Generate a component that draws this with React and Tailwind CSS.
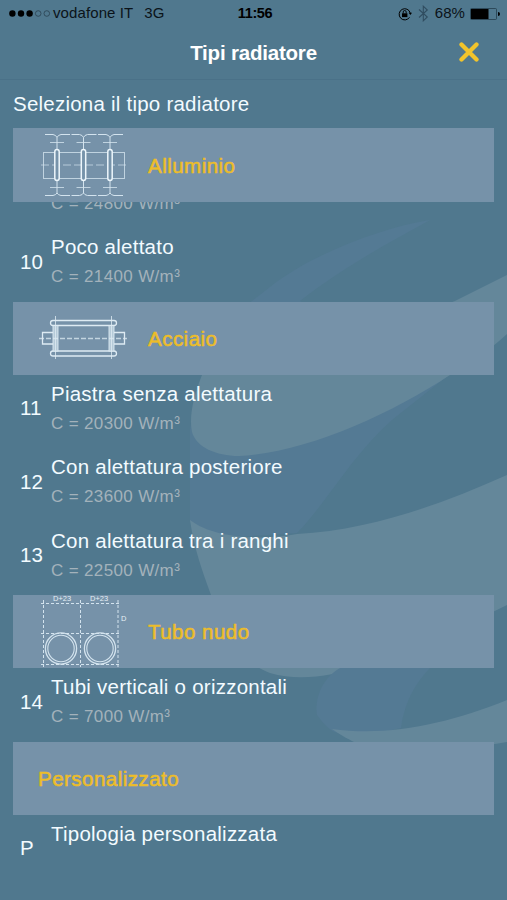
import React from "react";

function Backdrop() {
  return (
    <svg className="absolute inset-0 -z-10" width="507" height="900" viewBox="0 0 507 900" fill="none">
      <path d="M430 220 C380 228 310 255 270 287 L252 301 C214 332 199 370 190 430 L190 522 C196 532 212 537 235 537 L297 533 C325 505 352 455 392 420 C413 403 430 390 450 374 L300 301 C345 266 390 242 430 220Z" fill="#547a94" />
      <path d="M507 275 L455 301 C360 338 230 337 202 375 C193 397 189 418 192 432 C196 447 216 456 239 456 C305 453 389 415 450 375 C472 361 490 350 507 334Z" fill="#64879a" />
      <path d="M507 475 C440 505 370 530 297 534 C260 541 213 538 190 520 C194 548 202 570 211 595 C220 640 240 661 270 673 C300 682 333 675 360 668 C414 655 455 630 507 605Z" fill="#64879a" />
      <path d="M340 668 C320 680 315 700 317 715 C325 726 331 731 337 733 C360 737 380 733 401 728 C405 700 416 683 430 668Z" fill="#547a94" />
      <path d="M507 700 C450 723 390 737 332 729 C342 736 350 740 358 744 L495 744 L507 742Z" fill="#64879a" />
    </svg>
  );
}

function StatusBar() {
  return (
    <div className="flex h-[27px] items-center pl-[9px] pr-[6px] text-[15px] text-[#0b1319]">
      <div className="flex flex-1 items-center">
        <svg width="42" height="10" viewBox="0 0 42 10">
          <circle cx="3.4" cy="4.5" r="3.2" fill="#000" />
          <circle cx="12" cy="4.5" r="3.2" fill="#000" />
          <circle cx="20.6" cy="4.5" r="3.2" fill="#000" />
          <circle cx="29.2" cy="4.5" r="2.8" fill="none" stroke="#243947" strokeWidth=".7" />
          <circle cx="37.8" cy="4.5" r="2.8" fill="none" stroke="#243947" strokeWidth=".7" />
        </svg>
        <span className="ml-[2px] whitespace-nowrap tracking-[0.1px]">vodafone IT</span>
        <span className="ml-[11px]">3G</span>
      </div>
      <span className="text-[14.5px] font-bold tracking-[-0.4px] text-black">11:56</span>
      <div className="flex flex-1 items-center justify-end">
        <svg width="14" height="14" viewBox="0 0 14 14" fill="none" stroke="#000">
          <path d="M11.5 10.3A5.6 5.6 0 1 1 12.2 6" strokeWidth="1" />
          <path d="M10.7 5.8H14L12.4 8Z" fill="#000" stroke="none" />
          <rect x="4" y="6.3" width="5.4" height="3.8" fill="#000" stroke="none" />
          <path d="M5.2 6.5V5a1.5 1.5 0 0 1 3 0v1.5" strokeWidth=".9" />
        </svg>
        <svg className="ml-[6px]" width="11" height="17" viewBox="0 0 11 17" fill="none" stroke="#304d60" strokeWidth="1.1">
          <path d="M1 4.5L9.3 12 5.3 15.8V1.2L9.3 5 1 12.5" />
        </svg>
        <span className="ml-[6px] mr-[5px] tracking-[0.1px]">68%</span>
        <svg className="mr-px" width="30" height="12" viewBox="0 0 30 12">
          <rect x=".5" y=".5" width="26" height="11" rx="1" fill="none" stroke="#243d4d" strokeWidth=".8" />
          <rect x="1" y="1" width="17.5" height="10" fill="#000" />
          <path d="M28 4a2 2 0 0 1 0 4Z" fill="#000" />
        </svg>
      </div>
    </div>
  );
}

function AluminiumIcon() {
  return (
    <svg className="ml-[2px]" width="86" height="64" viewBox="0 0 86 64" fill="none" stroke="#d3e3ee" strokeWidth="1">
      <rect x="2.5" y="19.5" width="81" height="26" strokeOpacity=".8" />
      <path d="M0 32H86" strokeDasharray="8 3" strokeOpacity=".7" />
      {[16, 42.5, 69].map((x) => (
        <g key={x} transform={`translate(${x} 0)`}>
          <path d="M-12 1.5H-4Q-1 2 0 4.5V60Q-1 62 -4 62.5H-12M0 4.5Q1 2 4 1.5H13M0 60Q1 62 4 62.5H13" />
          <path d="M-7 9.5H7M-7 54.5H7" strokeOpacity=".8" />
          <rect x="-2.2" y="16.5" width="4.4" height="31" rx="2.2" fill="#7693aa" stroke="#edf6fb" strokeWidth="1.5" />
        </g>
      ))}
    </svg>
  );
}

function SteelIcon() {
  return (
    <svg width="88" height="44" viewBox="0 0 88 44" fill="none" stroke="#deebf3" strokeWidth="1.3">
      <rect x="11.5" y="4.5" width="66" height="5" rx="2.5" />
      <rect x="11.5" y="35" width="66" height="5" rx="2.5" />
      <rect x="14" y="9.5" width="5" height="25.5" fill="#b5cad8" strokeWidth=".9" />
      <rect x="70" y="9.5" width="5" height="25.5" fill="#b5cad8" strokeWidth=".9" />
      <path d="M14 16.5H3.5V28H14M75 16.5H85.5V28H75" />
      <path d="M16.5 0V43M72.5 0V43" strokeWidth=".8" />
      <path d="M0 22.5H88" strokeDasharray="5 2" strokeOpacity=".75" />
    </svg>
  );
}

function PipesIcon() {
  return (
    <svg className="ml-[1px]" width="88" height="74" viewBox="0 0 88 74" fill="none" stroke="#d3e3ee">
      <path d="M1 8.5H81M1 38.5H81M1 69.5H81M3.5 5V72M40.5 5V72M78 5V72" strokeWidth="1" strokeDasharray="3 2" />
      {[21, 60].map((x) => (
        <g key={x}>
          <circle cx={x} cy="53.5" r="15.6" strokeWidth="1.3" />
          <circle cx={x} cy="53.5" r="13.2" strokeWidth="1.1" />
        </g>
      ))}
      <g fill="#e5eff5" stroke="none" fontFamily="Liberation Sans, sans-serif" fontSize="7.5">
        <text x="13" y="6">D+23</text>
        <text x="50" y="6">D+23</text>
        <text x="81" y="26">D</text>
      </g>
    </svg>
  );
}

function GroupHeader({ title, children }) {
  return (
    <div className="mx-[13px] flex h-[73.33px] shrink-0 items-center bg-[#7692a9] text-[20.5px] text-[#edbd29] [-webkit-text-stroke:0.55px_#edbd29]">
      {children ? (
        <div className="flex h-full w-[135px] shrink-0 items-center pl-[26px] [-webkit-text-stroke:0]">{children}</div>
      ) : (
        <div className="w-[25px]" />
      )}
      <span className="pt-[2px] tracking-[0.48px]">{title}</span>
    </div>
  );
}

function Value({ children }) {
  return <div className="whitespace-nowrap text-[17px] leading-[24px] tracking-[0.35px] text-[#a3b2bb]">{children}</div>;
}

function Row({ code, name, value }) {
  return (
    <div className="flex h-[73.33px] shrink-0 pl-5">
      <span className="w-[31px] pt-[19.5px] text-[20.5px] leading-[28px]">{code}</span>
      <div>
        <div className="mb-[4px] h-[33px] whitespace-nowrap pt-[5px] text-[20.5px] leading-[28px] tracking-[0.24px]">{name}</div>
        {value && <Value>{value}</Value>}
      </div>
    </div>
  );
}

export default function App() {
  return (
    <main className="relative isolate flex h-[900px] w-[507px] flex-col overflow-hidden bg-[#50788e] font-['Liberation_Sans',Arial,sans-serif] text-[#f3fbff]">
      <Backdrop />
      <StatusBar />
      <header className="flex h-[53px] items-center border-b border-[#4a7188]">
        <div className="w-[68px]" />
        <h1 className="flex-1 text-center text-[20.5px] font-bold tracking-[-0.2px] text-white">Tipi radiatore</h1>
        <button className="w-[68px] pl-[20px]" aria-label="Chiudi">
          <svg className="-mt-[2px]" width="20" height="20" viewBox="0 0 20 20" stroke="#f2c42b" strokeWidth="4.3" strokeLinecap="round">
            <path d="M2.5 2.5L17.5 17.5M17.500 2.500L2.500 17.500" />
          </svg>
        </button>
      </header>
      <div className="h-[48.33px] pl-[13px] pt-[10px] text-[20.5px] leading-[28px] tracking-[0.23px]">Seleziona il tipo radiatore</div>
      <GroupHeader title="Alluminio"><AluminiumIcon /></GroupHeader>
      <div className="h-[26.67px] shrink-0 overflow-hidden pl-[51px]">
        <div className="-mt-[10px]"><Value>C = 24800 W/m³</Value></div>
      </div>
      <Row code="10" name="Poco alettato" value="C = 21400 W/m³" />
      <GroupHeader title="Acciaio"><SteelIcon /></GroupHeader>
      <Row code="11" name="Piastra senza alettatura" value="C = 20300 W/m³" />
      <Row code="12" name="Con alettatura posteriore" value="C = 23600 W/m³" />
      <Row code="13" name="Con alettatura tra i ranghi" value="C = 22500 W/m³" />
      <GroupHeader title="Tubo nudo"><PipesIcon /></GroupHeader>
      <Row code="14" name="Tubi verticali o orizzontali" value="C = 7000 W/m³" />
      <GroupHeader title="Personalizzato" />
      <Row code="P" name="Tipologia personalizzata" />
    </main>
  );
}
